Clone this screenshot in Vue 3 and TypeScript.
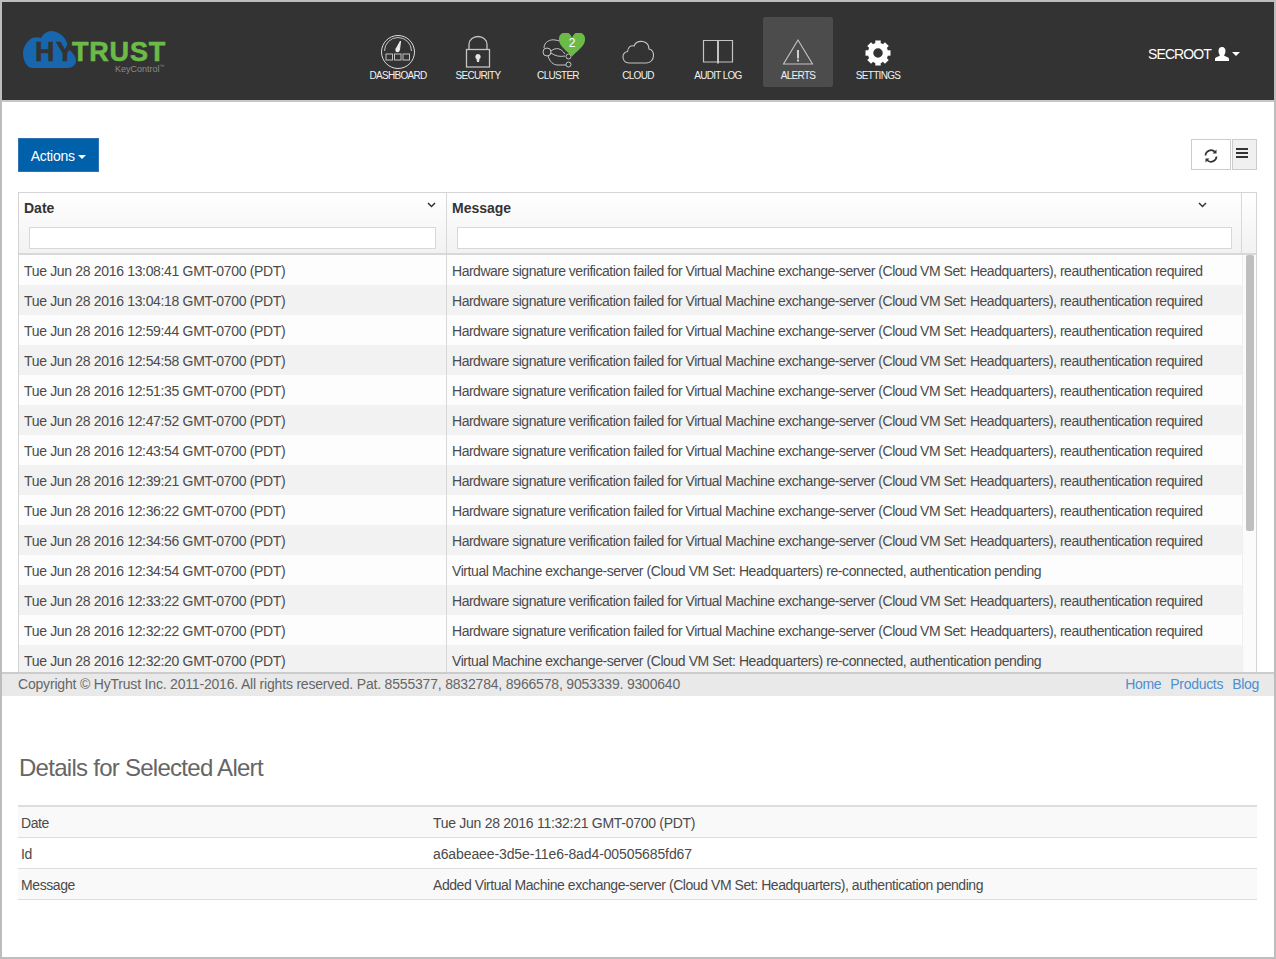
<script setup lang="ts">
const bad = 'Hardware signature verification failed for Virtual Machine exchange-server (Cloud VM Set: Headquarters), reauthentication required'
const ok = 'Virtual Machine exchange-server (Cloud VM Set: Headquarters) re-connected, authentication pending'
const times: [string, string][] = [
  ['13:08:41', bad], ['13:04:18', bad], ['12:59:44', bad], ['12:54:58', bad], ['12:51:35', bad],
  ['12:47:52', bad], ['12:43:54', bad], ['12:39:21', bad], ['12:36:22', bad], ['12:34:56', bad],
  ['12:34:54', ok], ['12:33:22', bad], ['12:32:22', bad], ['12:32:20', ok],
]
const rows = times.map(([t, message]) => ({ date: `Tue Jun 28 2016 ${t} GMT-0700 (PDT)`, message, long: message === bad }))
const nav = ['DASHBOARD', 'SECURITY', 'CLUSTER', 'CLOUD', 'AUDIT LOG', 'ALERTS', 'SETTINGS']
const gearTeeth = [0, 45, 90, 135, 180, 225, 270, 315]
const details = [
  { key: 'Date', value: 'Tue Jun 28 2016 11:32:21 GMT-0700 (PDT)', cls: 'tight-date' },
  { key: 'Id', value: 'a6abeaee-3d5e-11e6-8ad4-00505685fd67', cls: 'tight-id' },
  { key: 'Message', value: 'Added Virtual Machine exchange-server (Cloud VM Set: Headquarters), authentication pending', cls: 'tight-msg' },
]
</script>

<template>
  <div class="window">
    <header class="topbar">
      <div class="logo">
        <svg class="logo-cloud" width="56" height="40" viewBox="0 0 56 40">
          <path d="M9 37C3 37 0 28 0 22c0-6 4-12 9-15 3-1 6-1 9 0C20 3 24 0 28 0c7 0 14 5 16 12 1 2 1 4 0 6 5 2 9 7 9 12 0 4-4 7-8 7Z" fill="#1766ae"/>
        </svg>
        <span class="logo-hy">HY</span>
        <span class="logo-trust">TRUST</span>
        <span class="logo-sub">KeyControl<sup>™</sup></span>
      </div>
      <nav class="nav">
        <div v-for="n in nav" :key="n" class="nav-item" :class="{ active: n === 'ALERTS' }">
          <svg class="nav-icon" width="40" height="36" viewBox="0 0 40 36" fill="none" stroke="#c4c4c4" stroke-width="1">
            <template v-if="n === 'DASHBOARD'">
              <circle cx="20" cy="18" r="16.5" stroke="#ddd"/>
              <path d="M6.500 17a13.500 13.500 0 0 1 27 0" />
              <path d="M22.500 7l-4.500 8 3.500 1z" fill="#eee" stroke="#eee"/>
              <circle cx="19.500" cy="16" r="2.200" fill="#eee" stroke="none"/>
              <rect x="8" y="20" width="6.500" height="6"/><rect x="16.500" y="20" width="6.500" height="6"/><rect x="25" y="20" width="6.500" height="6"/>
            </template>
            <template v-else-if="n === 'SECURITY'">
              <path d="M11 15V10.500a9 8 0 0 1 18 0V15" stroke-width="1.300"/>
              <rect x="8.500" y="15.500" width="23" height="17.500" stroke-width="1.300"/>
              <path d="M20 20a2.800 2.800 0 0 1 1.500 5.100L21 28h-2l-.5-2.900A2.800 2.800 0 0 1 20 20Z" fill="#e6e6e6" stroke="none"/>
            </template>
            <template v-else-if="n === 'CLUSTER'">
              <path d="M6 14c0-6 6-9 11-8 3 .5 6 1 9 3" />
              <path d="M10 22c2 6 5 9 10 9h8" />
              <circle cx="9" cy="18" r="4"/>
              <path d="M13 17c5-4 10-3 14 3M13 19c4 3 9 4 14 3" />
              <circle cx="30.500" cy="22.500" r="2.500"/><circle cx="30.500" cy="30.500" r="2.500"/>
            </template>
            <template v-else-if="n === 'CLOUD'">
              <path d="M11 29c-4 0-6-3-6-6 0-3 2-5 4.500-5.500C10 13 13 11 16 12c1.500-4 5-5 9-4.500 4 1 6 4 6 7.500 3 .5 4.500 3 4.500 6.500 0 4-3 7.500-7 7.500Z" stroke-width="1.100"/>
            </template>
            <template v-else-if="n === 'AUDIT LOG'">
              <path d="M20 6.500H5.500v21.500H20m0-21.500h14.500v21.500H20" stroke-width="1.200"/>
              <path d="M20 6.500v23" stroke-width="2"/>
            </template>
            <template v-else-if="n === 'ALERTS'">
              <path d="M20 6 5.500 30h29Z" stroke-width="1.100"/>
              <path d="M20 16v8.500" stroke="#ddd" stroke-width="1.800"/>
              <path d="M20 25.500v2" stroke="#ddd" stroke-width="1.800"/>
            </template>
            <template v-else>
              <circle cx="20" cy="19" r="7.500" stroke="#fff" stroke-width="5.500"/>
              <rect v-for="a in gearTeeth" :key="a" x="17.300" y="6.500" width="5.400" height="5" fill="#fff" stroke="none" :transform="`rotate(${a} 20 19)`"/>
            </template>
          </svg>
          <span class="nav-label">{{ n }}</span>
          <span v-if="n === 'CLUSTER'" class="badge">
            <svg width="26" height="24" viewBox="0 0 26 24">
              <path d="M13 23.500C9 19 0 13 0 7a6.500 6.500 0 0 1 13-2A6.500 6.500 0 0 1 26 7c0 6-9 12-13 16.500Z" fill="#6cbb48"/>
            </svg>
            <span class="badge-num">2</span>
          </span>
        </div>
      </nav>
      <div class="user">
        SECROOT
        <svg width="14" height="14" viewBox="0 0 14 14">
          <path d="M7 0c2.500 0 3.500 2 3.500 4S9.500 7.500 9 8.500c1 1 5 1.500 5 3.500v2H0v-2c0-2 4-2.500 5-3.500C4.500 7.500 3.500 6 3.500 4S4.500 0 7 0Z" fill="#fff"/>
        </svg>
        <i class="caret"></i>
      </div>
    </header>

    <main class="alerts">
      <div class="toolbar">
        <button class="actions">Actions <i class="caret"></i></button>
        <div class="tools">
          <button class="tool refresh">
            <svg width="14" height="14" viewBox="0 0 14 14" fill="none" stroke="#333" stroke-width="1.700">
              <path d="M1.500 6.500A5.500 5.500 0 0 1 11 3"/>
              <path d="M12.500 7.500A5.500 5.500 0 0 1 3 11"/>
              <path d="M12.500 .5v4h-4z" fill="#333" stroke="none"/>
              <path d="M1.500 13.500v-4h4z" fill="#333" stroke="none"/>
            </svg>
          </button>
          <button class="tool menu"><i></i><i></i><i></i></button>
        </div>
      </div>

      <div class="grid">
        <div class="grid-head">
          <div class="head-cell date-col">
            <div class="head-title"><b>Date</b><svg class="chev" width="9" height="6" viewBox="0 0 9 6"><path d="M1 1l3.500 3.500L8 1" fill="none" stroke="#333" stroke-width="1.500"/></svg></div>
            <div class="filter"></div>
          </div>
          <div class="head-cell msg-col">
            <div class="head-title"><b>Message</b><svg class="chev msg-chev" width="9" height="6" viewBox="0 0 9 6"><path d="M1 1l3.500 3.500L8 1" fill="none" stroke="#333" stroke-width="1.500"/></svg></div>
            <div class="filter msg-filter"></div>
          </div>
          <div class="head-gutter"></div>
        </div>
        <div class="grid-body">
          <div class="rows">
            <div v-for="(r, i) in rows" :key="i" class="row" :class="{ odd: i % 2 === 1 }">
              <div class="cell date-col">{{ r.date }}</div>
              <div class="cell msg-col" :class="{ long: r.long }">{{ r.message }}</div>
            </div>
          </div>
          <div class="scroll"><div class="thumb"></div></div>
        </div>
      </div>
    </main>

    <footer class="footer">
      <span class="copy">Copyright © HyTrust Inc. 2011-2016. All rights reserved. Pat. 8555377, 8832784, 8966578, 9053339. 9300640</span>
      <div class="links"><a>Home</a><a>Products</a><a>Blog</a></div>
    </footer>

    <section class="details">
      <h2>Details for Selected Alert</h2>
      <div class="dtable">
        <div v-for="(d, i) in details" :key="d.key" class="drow" :class="{ odd: i % 2 === 0 }">
          <div class="dkey">{{ d.key }}</div>
          <div :class="d.cls">{{ d.value }}</div>
        </div>
      </div>
    </section>
  </div>
</template>

<style>
html, body { margin: 0; padding: 0; background: #fff; }
</style>

<style scoped>
.window {
  width: 1276px; height: 959px; box-sizing: border-box; overflow: hidden;
  border: 2px solid #bdbdbd; background: #fff; color: #4a4a4a;
  font-family: "Liberation Sans", Arial, sans-serif; font-size: 14px;
  display: flex; flex-direction: column;
}
.topbar {
  position: relative; flex: none; height: 100px; box-sizing: border-box;
  background: #333; border-bottom: 2px solid #c8c8c8; display: flex; color: #fff;
}
.logo { position: relative; width: 361px; flex: none; }
.logo-cloud { position: absolute; left: 21px; top: 29px; }
.logo-hy, .logo-trust { position: absolute; font-weight: 700; font-size: 27px; line-height: 21px; -webkit-text-stroke: .6px currentColor; }
.logo-hy { left: 33px; top: 40px; color: #333; letter-spacing: 1.500px; }
.logo-trust { left: 70px; top: 40px; color: #6cbb48; letter-spacing: .8px; }
.logo-sub { position: absolute; left: 113px; top: 61px; font-size: 9px; line-height: 12px; color: #8a8a8a; white-space: nowrap; }
.logo-sub sup { font-size: 5px; line-height: 0; }
.nav { display: flex; gap: 10px; padding-top: 15px; }
.nav-item { position: relative; width: 70px; height: 70px; border-radius: 2px; display: flex; flex-direction: column; align-items: center; }
.nav-item.active { background: #4c4c4c; }
.nav-icon { margin-top: 17px; display: block; }
.nav-label { position: absolute; top: 52px; left: 0; right: 0; text-align: center; font-size: 10px; line-height: 14px; letter-spacing: -.7px; color: #f2f2f2; white-space: nowrap; }
.badge { position: absolute; left: 36px; top: 16px; width: 26px; height: 24px; }
.badge svg { display: block; }
.badge-num { position: absolute; left: 0; right: 0; top: 3px; text-align: center; font-size: 12px; line-height: 14px; color: #fff; }
.user { position: absolute; left: 1146px; top: 44px; display: flex; align-items: center; gap: 4px; font-size: 14px; line-height: 16px; letter-spacing: -.9px; white-space: nowrap; }
.caret { display: inline-block; width: 0; height: 0; border: 4px solid transparent; border-top-color: currentColor; border-bottom-width: 0; vertical-align: middle; }
.user .caret { margin-left: -1px; }
.alerts { flex: none; height: 570px; box-sizing: border-box; overflow: hidden; padding: 36px 17px 0 16px; }
.toolbar { display: flex; justify-content: space-between; height: 34px; margin-bottom: 20px; }
.actions { width: 81px; height: 34px; padding: 1px 0 0; background: #0060a9; border: 1px solid #2e74b5; color: #fff; font: inherit; letter-spacing: -.3px; }
.tools { display: flex; gap: 1px; padding-top: 1px; }
.tool { height: 31px; box-sizing: border-box; border: 1px solid #ccc; background: #fff; padding: 0; display: flex; }
.refresh { width: 40px; align-items: center; justify-content: center; padding-top: 2px; }
.menu { width: 25px; background: #f0f0f0; flex-direction: column; padding: 8px 0 0 3px; }
.menu i { display: block; width: 12px; height: 2px; background: #333; margin-bottom: 2px; }
.grid { height: 480px; box-sizing: border-box; border: 1px solid #d4d4d4; border-bottom: 0; }
.grid-head { display: flex; height: 60px; border-bottom: 2px solid #d8d8d8; background: linear-gradient(#fff, #f2f2f2); }
.head-cell { box-sizing: border-box; position: relative; }
.date-col { width: 427px; flex: none; box-sizing: border-box; }
.msg-col { flex: 1; min-width: 0; border-left: 1px solid #d8d8d8; box-sizing: border-box; }
.head-cell.msg-col { width: 795px; flex: none; }
.head-gutter { flex: 1; border-left: 1px solid #d8d8d8; }
.head-title { height: 34px; padding: 7px 0 0 5px; box-sizing: border-box; color: #333; line-height: 16px; position: relative; }
.chev { position: absolute; right: 10px; top: 9px; }
.msg-chev { right: 34px; }
.filter { height: 22px; box-sizing: border-box; border: 1px solid #d8d8d8; background: #fff; margin: 0 10px; }
.msg-filter { margin-right: 9px; }
.grid-body { display: flex; height: 417px; overflow: hidden; }
.rows { width: 1223px; flex: none; }
.row { display: flex; height: 30px; line-height: 30px; background: #fdfdfd; white-space: nowrap; }
.row.odd { background: #f2f2f2; }
.cell { height: 30px; box-sizing: border-box; padding-top: 1px; }
.cell.date-col { padding-left: 5px; letter-spacing: -.33px; }
.cell.msg-col { padding-left: 5px; overflow: hidden; letter-spacing: -.43px; }
.cell.msg-col.long { letter-spacing: -.485px; }
.scroll { flex: 1; border-left: 1px solid #eee; padding: 0 3px; background: #fbfbfb; box-shadow: inset -1px 0 #eee; }
.thumb { width: 8px; height: 276px; background: #bfbfbf; border-radius: 2px; }
.footer {
  flex: none; height: 24px; box-sizing: border-box; border-top: 2px solid #ccc; background: #e9e9e9;
  display: flex; justify-content: space-between; padding: 0 15px 0 16px; line-height: 20px; color: #666;
}
.copy { letter-spacing: -.19px; }
.links { display: flex; gap: 9px; letter-spacing: -.3px; }
.links a { color: #4a90d2; }
.details { padding: 0 17px 0 16px; }
h2 { margin: 57px 0 0 1px; font-size: 24px; font-weight: 400; line-height: 30px; color: #666; letter-spacing: -.73px; }
.dtable { margin-top: 22px; border-top: 2px solid #ddd; }
.drow { display: flex; height: 31px; box-sizing: border-box; border-bottom: 1px solid #ddd; line-height: 30px; padding: 1px 0 0 3px; }
.drow.odd { background: #f9f9f9; }
.dkey { width: 412px; flex: none; letter-spacing: -.4px; }
.tight-date { letter-spacing: -.28px; }
.tight-id { letter-spacing: -.11px; }
.tight-msg { letter-spacing: -.44px; }
</style>
